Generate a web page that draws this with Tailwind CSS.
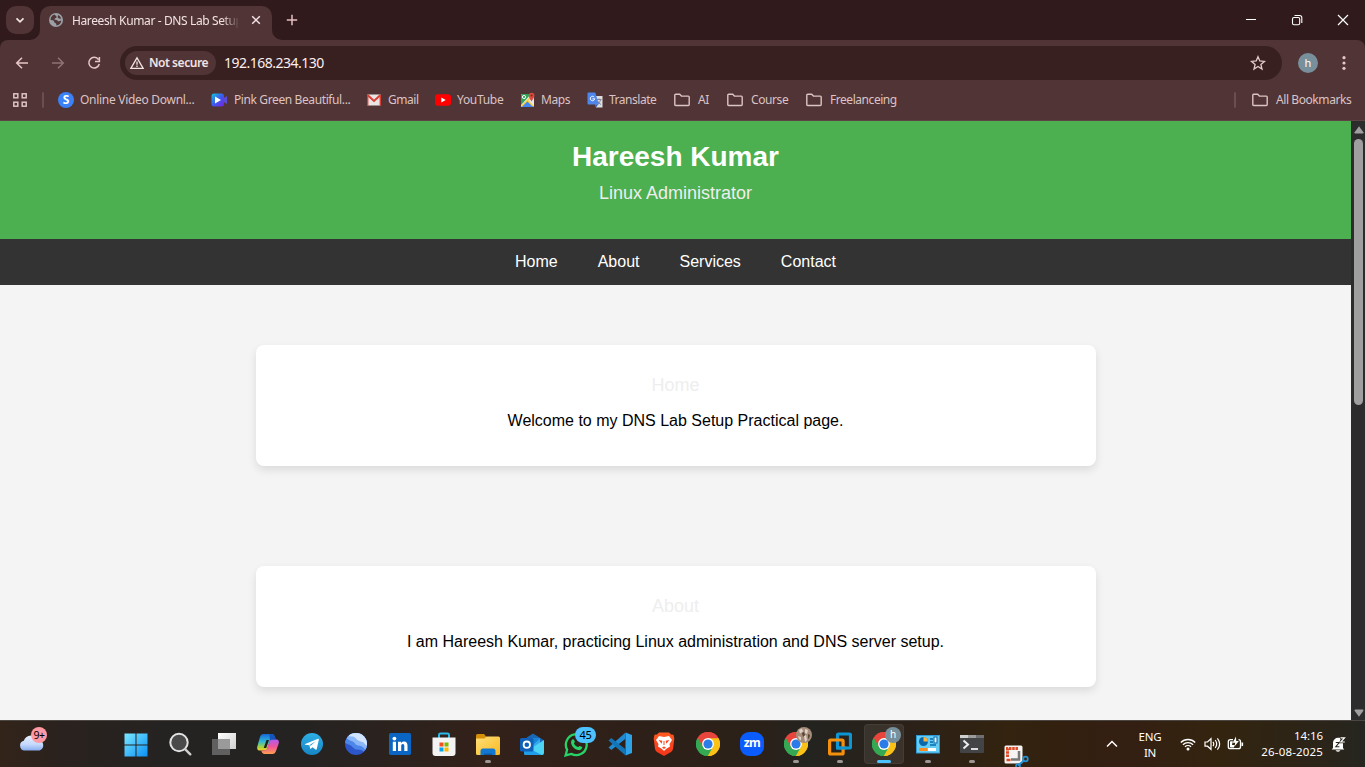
<!DOCTYPE html>
<html lang="en">
<head>
<meta charset="utf-8">
<title>Hareesh Kumar - DNS Lab Setup</title>
<script src="https://cdn.jsdelivr.net/npm/@tailwindcss/browser@4"></script>
</head>
<body class="w-[1365px] h-[767px] overflow-hidden flex flex-col bg-[#311a1b] font-['Segoe_UI','Noto_Sans',sans-serif]">
<svg class="absolute size-0">
  <defs>
    <linearGradient id="win" x1="0" y1="0" x2="1" y2="1"><stop offset="0" stop-color="#7be9ff"/><stop offset="1" stop-color="#0a8ff5"/></linearGradient>
    <linearGradient id="cloud" x1="0" y1="0" x2="0" y2="1"><stop offset="0" stop-color="#e8f1ff"/><stop offset=".6" stop-color="#c3d8fb"/><stop offset="1" stop-color="#88aef0"/></linearGradient>
    <linearGradient id="cp1" x1="0" y1="0" x2="0" y2="1"><stop offset="0" stop-color="#1668d8"/><stop offset=".45" stop-color="#2fb6d8"/><stop offset=".8" stop-color="#a8d43c"/><stop offset="1" stop-color="#f5d02c"/></linearGradient>
    <linearGradient id="cp2" x1="0" y1="0" x2="0" y2="1"><stop offset="0" stop-color="#b05af0"/><stop offset=".5" stop-color="#f0559a"/><stop offset="1" stop-color="#ffa04c"/></linearGradient>
    <linearGradient id="tg" x1="0" y1="0" x2="0" y2="1"><stop offset="0" stop-color="#2faee6"/><stop offset="1" stop-color="#1686c4"/></linearGradient>
    <linearGradient id="fold" x1="0" y1="0" x2="1" y2="1"><stop offset="0" stop-color="#ffdf7a"/><stop offset="1" stop-color="#f8b921"/></linearGradient>
    <linearGradient id="tv" x1="0" y1="0" x2="1" y2="1"><stop offset="0" stop-color="#ffffff"/><stop offset="1" stop-color="#cfcfcf"/></linearGradient>
    <linearGradient id="brv" x1="0" y1="0" x2="0" y2="1"><stop offset="0" stop-color="#ff5a1f"/><stop offset="1" stop-color="#f5331b"/></linearGradient>
    <linearGradient id="cam" x1="0" y1="0" x2="1" y2="1"><stop offset="0" stop-color="#12c7d6"/><stop offset=".5" stop-color="#3a5cf0"/><stop offset="1" stop-color="#7a20e0"/></linearGradient>
    <clipPath id="earthclip"><circle cx="12" cy="12" r="11"/></clipPath>
    <symbol id="folder" viewBox="0 0 18 16"><path d="M1.8 3.2q0-.9.9-.9h4l1.7 1.8h6.900q.9 0 .9.9v7.600q0 .9-.9.9H2.700q-.9 0-.9-.9z" fill="none" stroke="#dcc3c4" stroke-width="1.400"/></symbol>
    <symbol id="chrome" viewBox="0 0 24 24">
      <path d="M12 12 1.600 6A12 12 0 0 1 22.400 6z" fill="#e8453c"/>
      <path d="M12 12V24A12 12 0 0 1 1.600 6z" fill="#34a853"/>
      <path d="M12 12 22.400 6A12 12 0 0 1 12 24z" fill="#fbc116"/>
      <path d="M12 6.200H22.500A12 12 0 0 0 1.600 6l5.300 9z" fill="#e8453c"/>
      <path d="M1.600 6A12 12 0 0 0 12 24l5-9-5 2.500-5-2.700z" fill="#34a853"/>
      <path d="M12 6.300H22.500A12 12 0 0 1 12 24l5.200-9z" fill="#fbc116"/>
      <circle cx="12" cy="12" r="5.900" fill="#fff"/><circle cx="12" cy="12" r="4.600" fill="#2b7be9"/>
    </symbol>
  </defs>
</svg>

<!-- Tab strip -->
<header class="h-[40px] shrink-0 flex bg-[#311a1b] text-[#f3e3e3]">
  <div class="w-[40px] pl-[6px] pt-[6px]">
    <div class="size-[28px] rounded-[10px] bg-[#503436] flex items-center justify-center">
      <svg class="size-[12px]" viewBox="0 0 12 12"><path d="M2.500 4.300 6 7.800l3.500-3.500" fill="none" stroke="#f3e3e3" stroke-width="1.700"/></svg>
    </div>
  </div>
  <div class="relative w-[232px] h-[34px] mt-[6px] rounded-t-[10px] bg-[#503436] flex items-center pl-[9px] pb-[6px]">
    <svg class="absolute -left-[10px] bottom-0 size-[10px]" viewBox="0 0 10 10"><path d="M10 0v10H0A10 10 0 0 0 10 0z" fill="#503436"/></svg>
    <svg class="absolute -right-[10px] bottom-0 size-[10px]" viewBox="0 0 10 10"><path d="M0 0v10h10A10 10 0 0 1 0 0z" fill="#503436"/></svg>
    <svg class="size-[14px] shrink-0" viewBox="0 0 14 14"><circle cx="7" cy="7" r="7" fill="#9aa0a6"/><path d="M5.700 1.500C6 3 8 2.500 7.500 4.500 7 5.500 5.500 5 5.300 6.400 6.500 7 8.700 6.500 9 8.300c.8.500 2-.5 3.300-.8a5.500 5.500 0 0 1-5 4.900c.3-1.500-.2-2-1.200-2.400C4.800 9.500 5.500 7.500 3.800 7.200L1.600 7A5.500 5.500 0 0 1 5.700 1.500zM9 2.100c1.700.7 2.700 2 3.200 3.500-1.500.4-3.200-.1-3.500-1.300z" fill="#503436"/></svg>
    <div class="ml-[9px] w-[166px] overflow-hidden whitespace-nowrap text-[12px] leading-[16px] pt-px tracking-[-0.38px] [mask-image:linear-gradient(to_right,black_150px,transparent_168px)]">Hareesh Kumar - DNS Lab Setup</div>
    <svg class="ml-[13px] size-[10px] shrink-0" viewBox="0 0 10 10"><path d="m1.200 1.200 7.600 7.600m0-7.600L1.200 8.800" stroke="#f3e3e3" stroke-width="1.500"/></svg>
  </div>
  <svg class="ml-[14px] mt-[14px] size-[12px]" viewBox="0 0 12 12"><path d="M6 .8v10.400M.8 6h10.400" stroke="#e5bfc1" stroke-width="1.500"/></svg>
  <div class="ml-auto mt-[14px] flex gap-[34px] pr-[16px]">
    <svg class="size-[12px]" viewBox="0 0 12 12"><path d="M1 5.500h10" stroke="#fff"/></svg>
    <svg class="size-[12px]" viewBox="0 0 12 12"><rect x="1.500" y="3.500" width="7.200" height="7.200" rx="1.500" fill="none" stroke="#fff" stroke-width="1.100"/><path d="M3.500 1.500h5.200q2.100 0 2.100 2.100V9" fill="none" stroke="#fff" stroke-width="1.100"/></svg>
    <svg class="size-[12px]" viewBox="0 0 12 12"><path d="m1 1 10 10M11 1 1 11" stroke="#fff" stroke-width="1.200"/></svg>
  </div>
</header>

<!-- Toolbar and bookmarks -->
<section class="h-[81px] shrink-0 rounded-t-[8px] bg-[#503436] border-b border-[#5e4244]">
  <div class="h-[46px] flex items-center">
    <svg class="ml-[15px] size-[14px]" viewBox="0 0 14 14"><path d="M13 7H1.800M7 1.700 1.700 7 7 12.300" fill="none" stroke="#e8c6c7" stroke-width="1.500"/></svg>
    <svg class="ml-[22px] size-[14px]" viewBox="0 0 14 14"><path d="M1 7h11.200M7 1.700 12.300 7 7 12.300" fill="none" stroke="#8e7375" stroke-width="1.500"/></svg>
    <svg class="ml-[22px] size-[14px]" viewBox="0 0 14 14"><path d="M11.500 3.600A5.300 5.300 0 1 0 12.300 8M12.400 1v4.400H8" fill="none" stroke="#e8c6c7" stroke-width="1.500"/></svg>
    <div class="ml-[19px] w-[1162px] h-[34px] rounded-full bg-[#382021] flex items-center pl-[5px]">
      <div class="w-[91px] h-[24px] rounded-full bg-[#503436] flex items-center pl-[5px] text-[#f3e3e3]">
        <svg class="size-[14px]" viewBox="0 0 14 14"><path d="M7 1.800 13.200 12.400H.8z" fill="none" stroke="#f3e3e3" stroke-width="1.300"/><path d="M7 5.400v3.300M7 9.500v1.400" stroke="#f3e3e3" stroke-width="1.300"/></svg>
        <span class="ml-[5px] text-[12px] font-semibold tracking-[-0.45px] whitespace-nowrap">Not secure</span>
      </div>
      <span class="ml-[8px] -mt-px text-[14px] tracking-[-0.5px] text-[#fbeeee]">192.168.234.130</span>
      <svg class="ml-auto mr-[16px] size-[16px]" viewBox="0 0 16 16"><path d="m8 1.700 1.800 4.300 4.600.4-3.500 3 1.100 4.600L8 11.500 4 14l1.100-4.600-3.500-3 4.600-.4z" fill="none" stroke="#e2cbcb" stroke-width="1.300"/></svg>
    </div>
    <div class="ml-[16px] size-[20px] rounded-full bg-[#78909c] text-white text-[11px] leading-[19px] text-center">h</div>
    <svg class="ml-[24px] w-[4px] h-[16px]" viewBox="0 0 4 16"><g fill="#e8c6c7"><circle cx="2" cy="2.700" r="1.600"/><circle cx="2" cy="8" r="1.600"/><circle cx="2" cy="13.300" r="1.600"/></g></svg>
  </div>
  <div class="h-[28px] flex items-center text-[12px] leading-[16px] text-[#dcc3c4] whitespace-nowrap">
    <svg class="ml-[13px] size-[14px] shrink-0" viewBox="0 0 14 14"><g fill="none" stroke="#dcc3c4" stroke-width="1.500"><rect x=".8" y=".8" width="4" height="4"/><rect x="9.200" y=".8" width="4" height="4"/><rect x=".8" y="9.200" width="4" height="4"/><rect x="9.200" y="9.200" width="4" height="4"/></g></svg>
    <div class="ml-[15px] w-[2px] h-[16px] rounded bg-[#6d4e50]"></div>
    <div class="ml-[14px] w-[153px] flex items-center gap-[6px] tracking-[-0.29px]"><div class="size-[16px] shrink-0 rounded-full bg-[#3b82f6] text-white font-bold text-center text-[12px]">S</div>Online Video Downl...</div>
    <div class="w-[155px] flex items-center gap-[7px] tracking-[-0.39px]"><svg class="size-[16px] shrink-0" viewBox="0 0 16 16"><path d="M12 6.500 16 4v8l-4-2.500z" fill="#5b4ad8"/><rect x=".5" y="1.500" width="12.500" height="13" rx="2.500" fill="url(#cam)"/><path d="M4 4.500v7L10 8z" fill="#fff"/></svg>Pink Green Beautiful...</div>
    <div class="w-[69px] flex items-center gap-[6px] tracking-[-0.45px]"><svg class="size-[16px] shrink-0" viewBox="0 0 16 16"><rect x="1" y="2.500" width="14" height="11" rx="1" fill="#e9e5e3"/><path d="M1.500 3 8 9l6.500-6" fill="none" stroke="#d93f35" stroke-width="2"/><path d="M1.700 3v10.500M14.300 3v10.500" stroke="#d93f35" stroke-width="1.400"/></svg>Gmail</div>
    <div class="w-[85px] flex items-center gap-[6px] tracking-[-0.3px]"><svg class="size-[16px] shrink-0" viewBox="0 0 16 16"><rect y="2.200" width="16" height="11.600" rx="3" fill="#f00"/><path d="M6.300 5.500v5L10.700 8z" fill="#fff"/></svg>YouTube</div>
    <div class="w-[67px] flex items-center gap-[5px] tracking-[-0.4px]"><svg class="size-[16px] shrink-0" viewBox="0 0 16 16"><rect x="1" y="2" width="13" height="13" rx="1" fill="#e8e8e8"/><path d="M1 3q0-1 1-1h9L1 13z" fill="#31a354"/><path d="m1 15 6.500-6.500L14 15z" fill="#4285f4"/><path d="m1.300 14.500 9-9M7.500 8.500 13 14" stroke="#f7ce46" stroke-width="1.500"/><circle cx="4" cy="5" r="1.600" fill="none" stroke="#fff"/><path d="M11.500 9.500C10 7 8.800 5.500 8.800 3.500a2.800 2.800 0 0 1 5.600 0c0 2-1.400 3.500-2.900 6z" fill="#dd4b3e"/><circle cx="11.600" cy="3.500" r="1" fill="#7b2a22"/></svg>Maps</div>
    <div class="w-[86px] flex items-center gap-[6px] tracking-[-0.48px]"><svg class="size-[16px] shrink-0" viewBox="0 0 16 16"><path d="M6 4h9.500v11.500H9z" fill="#dedede"/><path d="M9.500 7.500h5M12 6.500v1M13.500 8C13 10 11.500 11.500 10 12.500M10.500 9c.7 1.500 2 2.700 3.500 3.500" fill="none" stroke="#778" stroke-width=".9"/><path d="M.5 1.500q0-1 1-1h6.700L12 12.500H1.500q-1 0-1-1z" fill="#4f86ec"/><path d="M7.200 5.100a2.200 2.200 0 1 0 .5 1.700H5.500" fill="none" stroke="#fff" stroke-width="1"/><path d="m8 12.500 1 3 2-3z" fill="#2959b5"/></svg>Translate</div>
    <div class="w-[53px] flex items-center gap-[7px] tracking-[-0.3px]"><svg class="w-[18px] h-[16px] shrink-0"><use href="#folder"/></svg>AI</div>
    <div class="w-[79px] flex items-center gap-[7px] tracking-[-0.4px]"><svg class="w-[18px] h-[16px] shrink-0"><use href="#folder"/></svg>Course</div>
    <div class="flex items-center gap-[7px] tracking-[-0.45px]"><svg class="w-[18px] h-[16px] shrink-0"><use href="#folder"/></svg>Freelanceing</div>
    <div class="ml-auto w-[2px] h-[16px] rounded bg-[#6d4e50]"></div>
    <div class="ml-[15px] w-[114px] flex items-center gap-[7px] tracking-[-0.42px]"><svg class="w-[18px] h-[16px] shrink-0"><use href="#folder"/></svg>All Bookmarks</div>
  </div>
</section>

<!-- Web page -->
<main class="h-[599px] shrink-0 flex">
  <div class="w-[1351px] h-full overflow-hidden bg-[#f4f4f4] text-center text-black font-['Liberation_Sans',Arial,sans-serif]">
    <div class="h-[118px] bg-[#4caf50] pt-[19px]">
      <h1 class="text-[28px] leading-[33px] font-bold text-white">Hareesh Kumar</h1>
      <p class="mt-[10px] text-[18px] leading-[20px] text-[#eee]">Linux Administrator</p>
    </div>
    <nav class="h-[46px] bg-[#333] flex justify-center gap-[40px] text-[16px] leading-[46px] text-white">
      <a>Home</a><a>About</a><a>Services</a><a>Contact</a>
    </nav>
    <section class="mt-[60px] ml-[256px] w-[840px] h-[121px] rounded-[8px] bg-white shadow-[0_4px_8px_rgba(0,0,0,0.1)] pt-[30px] pr-px">
      <h2 class="text-[18px] leading-[20px] text-[#eee]">Home</h2>
      <p class="mt-[17px] text-[16px] leading-[18px]">Welcome to my DNS Lab Setup Practical page.</p>
    </section>
    <section class="mt-[100px] ml-[256px] w-[840px] h-[121px] rounded-[8px] bg-white shadow-[0_4px_8px_rgba(0,0,0,0.1)] pt-[30px] pr-px">
      <h2 class="text-[18px] leading-[20px] text-[#eee]">About</h2>
      <p class="mt-[17px] text-[16px] leading-[18px]">I am Hareesh Kumar, practicing Linux administration and DNS server setup.</p>
    </section>
  </div>
  <div class="w-[14px] bg-[#2c2c2c] flex flex-col items-center">
    <svg class="mt-[5px] ml-px w-[10px] h-[8px]" viewBox="0 0 10 8"><path d="M5 .3 9.400 6.200q.3 1.300-.7 1.300H1.300q-1 0-.7-1.300z" fill="#9f9f9f"/></svg>
    <div class="mt-[5px] ml-px w-[9px] h-[266px] rounded-full bg-[#9f9f9f]"></div>
    <svg class="mt-auto mb-[3px] ml-px w-[10px] h-[8px]" viewBox="0 0 10 8"><path d="M5 7.700.6 1.800Q.3.500 1.300.5h7.400q1 0 .7 1.300z" fill="#9f9f9f"/></svg>
  </div>
</main>

<!-- Taskbar -->
<footer class="h-[47px] shrink-0 border-t border-[#4b4642] flex text-white bg-[linear-gradient(90deg,#33241a_0,#2a221e_60px,#242322_180px,#242322_300px,#33211a_480px,#2e2018_620px,#2b2119_760px,#23231f_810px,#2b2119_900px,#33230f_1010px,#33200f_1060px,#341f13_1120px,#33240f_1220px,#2b2419_1320px,#252620_1365px)]">
  <div class="relative w-[114px]">
    <svg class="ml-[19px] mt-[11px] w-[26px] h-[20px]" viewBox="0 0 26 20"><path d="M5.500 18.500a5 5 0 0 1-.7-9.800A8 8 0 0 1 19.500 8a5.400 5.400 0 0 1 1 10.500z" fill="url(#cloud)"/></svg>
    <div class="absolute left-[31px] top-[6px] size-[16px] rounded-full bg-[#ff99a4] text-black text-[10.500px] leading-[16px] text-center tracking-[-0.5px]">9+</div>
  </div>
  <div class="flex">
    <div class="w-[44px] flex justify-center pt-[12px]"><svg class="size-[24px]" viewBox="0 0 24 24"><path d="M.5.5h11v11H.5zM12.500.5h11v11h-11zM.5 12.500h11v11H.5zM12.500 12.500h11v11h-11z" fill="url(#win)"/></svg></div>
    <div class="w-[44px] flex justify-center pt-[11px]"><svg class="size-[24px]" viewBox="0 0 24 24"><circle cx="11" cy="10.500" r="8.700" fill="#4a4a4a" stroke="#e2e2e2" stroke-width="2"/><path d="m17.300 17.300 5 5" stroke="#cfcfcf" stroke-width="2.400" stroke-linecap="round"/></svg></div>
    <div class="w-[44px] flex justify-center pt-[11px]"><svg class="size-[24px]" viewBox="0 0 24 24"><rect x="6" y="1" width="18" height="16" fill="url(#tv)"/><rect y="7" width="18" height="16" fill="#6b6b6b" fill-opacity=".85"/><rect x="6" y="7" width="12" height="10" fill="#9a9a9a"/></svg></div>
    <div class="w-[44px] flex justify-center pt-[11px]"><svg class="size-[24px]" viewBox="0 0 24 24"><path d="M7.500 2h8.300c2 0 2.700 1.500 3.200 3.500l.7 2h-3.200c-1.500 0-2.300.8-2.700 2l-2.500 7.300c-.5 1.200-1.200 1.700-2.500 1.700H3.500C1.300 18.500.8 16.300 1.300 14.500L4 5C4.600 3 5.800 2 7.500 2z" fill="url(#cp1)"/><path d="M16.500 22H8.700c-2 0-3-1.500-3.500-3.500H8c1.700 0 2.500-.8 3-2l2.600-7.300c.4-1.200 1.200-1.700 2.500-1.700h4.400c2.200 0 2.700 2 2.200 4L20 19c-.6 2-1.800 3-3.500 3z" fill="url(#cp2)"/><path d="M13.500 2h2.300c2 0 2.700 1.500 3.200 3.500l.7 2h-3.200c-1.300 0-2 .5-2.500 1.500z" fill="#1554b8"/><path d="m10.500 8 2.500 0-2.800 8-2.500 0z" fill="#25211f"/></svg></div>
    <div class="w-[44px] flex justify-center pt-[12px]"><svg class="size-[22px]" viewBox="0 0 24 24"><circle cx="12" cy="12" r="12" fill="url(#tg)"/><path d="M4.500 12 18.500 6.200c.7-.2 1.100.2 1 1L17.200 17.500c-.2.700-.7.900-1.300.5l-3.400-2.500-1.800 1.700c-.4.300-.7.100-.8-.3l-.7-3.600-4.600-.6q-.8-.2-.1-.7z" fill="#fff"/><path d="m9.400 13.200 6.500-4.300-5.300 5z" fill="#2a9ad8"/></svg></div>
    <div class="w-[44px] flex justify-center pt-[11px]"><svg class="size-[24px]" viewBox="0 0 24 24"><g clip-path="url(#earthclip)"><rect width="24" height="24" fill="#2c56ca"/><path d="M0 0h24v24c-3 0-3-4-6-5.500S12 19 9 15.500 4 13 0 10z" fill="#4d86ea"/><path d="M0 0h24v20c-3-1-3-4-6-5.500s-5 0-7-3S5 9 2 5.500z" fill="#8bb6f8"/><path d="M5 0h19v14c-3-.5-3-3-5.500-4S13.500 9 12 6.500 7 5 4 4z" fill="#d3e4fd"/></g></svg></div>
    <div class="w-[44px] flex justify-center pt-[12px]"><svg class="size-[22px]" viewBox="0 0 22 22"><rect width="22" height="22" rx="1.700" fill="#0a66c2"/><circle cx="5.400" cy="5.600" r="1.900" fill="#fff"/><path d="M3.800 8.700H7V18H3.800zM9 8.700h3V10c.6-1 1.700-1.600 3-1.600 2.700 0 3.500 1.700 3.500 4.300V18h-3.200v-4.700c0-1.200-.2-2.300-1.500-2.300s-1.600 1-1.600 2.200V18H9z" fill="#fff"/></svg></div>
    <div class="w-[44px] flex justify-center pt-[11px]"><svg class="size-[24px]" viewBox="0 0 24 24"><path d="M7 6V3q0-1.500 1.500-1.500h7Q17 1.500 17 3v3" fill="none" stroke="#2bb8ea" stroke-width="2"/><path d="M.5 5.500h23V21q0 3-3 3h-17q-3 0-3-3z" fill="#f3f3f3"/><path d="M7.500 10.500h4v4h-4z" fill="#f25022"/><path d="M12.500 10.500h4v4h-4z" fill="#7fba00"/><path d="M7.500 15.500h4v4h-4z" fill="#00a4ef"/><path d="M12.500 15.500h4v4h-4z" fill="#ffb900"/></svg></div>
    <div class="w-[44px] flex flex-col items-center pt-[11px]"><svg class="size-[24px]" viewBox="0 0 24 24"><path d="M0 3.500Q0 2 1.500 2H8l2.500 3v4H0z" fill="#d58d0a"/><path d="M0 6.500h8.500L10.500 4.500H22.500Q24 4.500 24 6v15.500q0 1.500-1.500 1.500h-21Q0 23 0 21.500z" fill="url(#fold)"/><path d="M4.500 23v-4q0-2.500 2.500-2.500h10q2.500 0 2.500 2.500v4z" fill="#1277d1"/><path d="M8 21.500h8V23H8z" fill="#0d5ba5"/></svg><div class="mt-[4px] w-[6px] h-[3px] rounded-full bg-[#9d9693]"></div></div>
    <div class="w-[44px] flex justify-center pt-[11px]"><svg class="size-[24px]" viewBox="0 0 24 24"><path d="m3 8 10-6.500L23.500 8v4H3z" fill="#1868b7"/><path d="M7 6.500h13V15H7z" fill="#35a6ee"/><path d="M13 6.500h7L13 13z" fill="#1785d6"/><path d="M24 8v13q0 2-2 2H6q-2 0-2-2z" fill="#4dd4f5"/><path d="M4 14v7q0 2 2 2h16z" fill="#1f9de8"/><rect y="6" width="13.500" height="13.500" rx="1.500" fill="#0f60b6"/><circle cx="6.800" cy="12.700" r="3.200" fill="none" stroke="#fff" stroke-width="1.800"/></svg></div>
    <div class="relative w-[44px] flex justify-center pt-[11px]"><svg class="size-[25px]" viewBox="0 0 24 24"><path d="M1.500 22.500 3 17A10 10 0 1 1 7 21z" fill="none" stroke="#25d366" stroke-width="2.200"/><path d="M8.300 7c.8-.4 1.200 0 1.500.8l.6 1.500c.1.600-.8 1.200-.8 1.700.8 1.700 2.200 2.800 3.900 3.500.6 0 1-1.400 1.700-1.100l2.200 1.100c.5.500-.2 2.500-2.400 3-4.500 0-8.500-4.500-8.200-8 .2-1.200.8-2 1.500-2.500z" fill="#25d366"/></svg><div class="absolute left-[21px] top-[6px] w-[21px] h-[16px] rounded-full bg-[#4cc2ff] text-black text-[11px] leading-[16px] text-center tracking-[-0.400px]">45</div></div>
    <div class="w-[44px] flex justify-center pt-[11px]"><svg class="size-[24px]" viewBox="0 0 24 24"><path d="M17.500.5 24 3v18l-6.500 2.500z" fill="#2ea3ea"/><path d="M17.500.5v6.300L3.300 18 .5 15.500z" fill="#1f8ad2"/><path d="M17.500 23.500v-6.300L3.300 6 .5 8.500z" fill="#1474b8"/></svg></div>
    <div class="w-[44px] flex justify-center pt-[11px]"><svg class="size-[24px]" viewBox="0 0 24 24"><path d="M7 .5h10l2 2 2.500.3.8 3.700-1.300 10.500q-.5 2-2 3L12 24l-7-4q-1.500-1-2-3L1.700 6.500l.8-3.700L5 2.500z" fill="url(#brv)"/><path d="m7 4 5 1 5-1 3 4-2.500 4 .5 2.500-4 2.500-2 2-2-2-4-2.500.5-2.500L4 8z" fill="#fff"/><path d="m6.500 8 3.800.8-.6 3zM17.500 8l-3.800.8.6 3zM10 15.500l2-1 2 1-2 1.500z" fill="#fa4720"/><path d="M12 9v4" stroke="#fa4720"/></svg></div>
    <div class="w-[44px] flex justify-center pt-[11px]"><svg class="size-[24px]"><use href="#chrome"/></svg></div>
    <div class="w-[44px] flex justify-center pt-[11px]"><div class="size-[24px] rounded-[9px] bg-[#0b5cff] text-white text-[12px] leading-[22px] text-center font-bold tracking-[-0.600px]">zm</div></div>
    <div class="relative w-[44px] flex flex-col items-center pt-[11px]"><svg class="size-[24px]"><use href="#chrome"/></svg><div class="mt-[4px] w-[6px] h-[3px] rounded-full bg-[#9d9693]"></div>
      <svg class="absolute left-[22px] top-[6px] size-[16px]" viewBox="0 0 16 16"><circle cx="8" cy="8" r="8" fill="#a58d79"/><path d="M3 3l3-1.500 1 3-3 2zM9 2l3 1-1 4-2-1zM2 9l3 1v3.500L3 12zM8 9l2-1 1 5-2 2z" fill="#dfd2c8"/><path d="m6 6 2-1 1 3-2 2zM12 7l2 1-1 4-1-1z" fill="#584234"/></svg></div>
    <div class="w-[44px] flex flex-col items-center pt-[11px]"><svg class="size-[24px]" viewBox="0 0 24 24"><rect x="9.500" y="2" width="13" height="14" rx="1" fill="none" stroke="#0c96d4" stroke-width="3.200"/><rect x="1.600" y="8" width="13.500" height="14" rx="1" fill="none" stroke="#f5900c" stroke-width="3.200"/><path d="M9.500 11v5h9" fill="none" stroke="#0c96d4" stroke-width="3"/></svg><div class="mt-[4px] w-[6px] h-[3px] rounded-full bg-[#9d9693]"></div></div>
    <div class="relative w-[44px] flex flex-col items-center pt-[3px]"><div class="w-[40px] h-[40px] rounded-[4px] bg-white/8 border border-white/5 flex flex-col items-center pt-[7px]"><svg class="size-[24px] shrink-0"><use href="#chrome"/></svg><div class="mt-[4px] w-[14px] h-[3px] shrink-0 rounded-full bg-[#4cc2ff]"></div></div>
      <div class="absolute left-[23px] top-[6px] size-[16px] rounded-full bg-[#78909c] text-[10px] leading-[15px] text-center">h</div></div>
    <div class="w-[44px] flex flex-col items-center pt-[11px]"><svg class="size-[24px]" viewBox="0 0 24 24"><rect x=".5" y="3.500" width="23" height="17.500" fill="#65cdf4" stroke="#2b9ad6"/><circle cx="7.500" cy="9.500" r="4.500" fill="#0868aa"/><path d="M7.500 9.500V5A4.500 4.500 0 0 1 12 9.500z" fill="#ffb23e"/><path d="M14 7h3m-3 3h3M14 13h6" stroke="#0868aa" stroke-width="1.400"/><rect x="18" y="5" width="3" height="6" fill="#e9f7fd" stroke="#0868aa"/><path d="M3 17.500h8" stroke="#f88b1d" stroke-width="3"/><path d="M12 17.500h8" stroke="#fff" stroke-width="3"/></svg><div class="mt-[4px] w-[6px] h-[3px] rounded-full bg-[#9d9693]"></div></div>
    <div class="w-[44px] flex flex-col items-center pt-[11px]"><svg class="size-[24px]" viewBox="0 0 24 24"><rect y="3" width="24" height="18" rx="1" fill="#434446"/><path d="M0 3h8v3H0z" fill="#cfcfcf"/><path d="M8 3h8v3H8z" fill="#9c9c9c"/><path d="M16 3h8v3h-8z" fill="#6f6f6f"/><path d="m3.500 8.500 4.500 4-4.500 4" fill="none" stroke="#eee" stroke-width="2"/><path d="M11 17h7" stroke="#eee" stroke-width="1.800"/></svg><div class="mt-[4px] w-[6px] h-[3px] rounded-full bg-[#9d9693]"></div></div>
    <div class="w-[44px] pl-[10px] pt-[24px] overflow-hidden"><svg class="w-[25px] h-[22px]" viewBox="0 0 25 22"><rect x=".5" y=".5" width="18" height="18" rx="1.500" fill="#f6f3f2"/><path d="M3.500 12V3.500H14" fill="none" stroke="#e24a25" stroke-width="3" stroke-dasharray="2.500 .8"/><path d="M2.500 15h4" stroke="#e24a25" stroke-width="2.500"/><path d="M7 14.500h8V6" fill="none" stroke="#777" stroke-width="2.500"/><circle cx="21.500" cy="14" r="2.300" fill="none" stroke="#2792d2" stroke-width="1.800"/><path d="m20 15.500-6 5" stroke="#2792d2" stroke-width="2"/><circle cx="14" cy="21" r="2" fill="none" stroke="#2792d2" stroke-width="1.600"/></svg></div>
  </div>
  <div class="ml-auto flex text-[11.500px] leading-[16px] tracking-[-0.2px] pt-[8px]">
    <svg class="mt-[9px] size-[12px]" viewBox="0 0 12 12"><path d="M1 8.500 6 3.500l5 5" fill="none" stroke="#fff" stroke-width="1.500"/></svg>
    <div class="ml-[18px] w-[28px] text-center">ENG<br>IN</div>
    <svg class="ml-[16px] mt-[7px] size-[16px]" viewBox="0 0 16 16"><path d="M.8 6.500a10.200 10.200 0 0 1 14.400 0M2.900 8.700a7.200 7.200 0 0 1 10.200 0M5 10.800a4.300 4.300 0 0 1 6 0" fill="none" stroke="#fff" stroke-width="1.300"/><circle cx="8" cy="13" r="1.500" fill="#fff"/></svg>
    <svg class="ml-[8px] mt-[7px] w-[17px] h-[16px]" viewBox="0 0 17 16"><path d="M1 6v4.200h2.500L7 13.300V2.700L3.500 6z" fill="none" stroke="#fff" stroke-width="1.200"/><path d="M9 5.800q1.500 2.200 0 4.400M11.200 4q3 4 0 8M13.400 2.300q4.500 5.700 0 11.400" fill="none" stroke="#fff" stroke-width="1.200"/></svg>
    <svg class="ml-[6px] mt-[7px] w-[17px] h-[16px]" viewBox="0 0 17 16"><path d="M6 3.700H3.300Q1.300 3.700 1.300 5.700v5q0 2 2 2h8.200q2 0 2-2v-5q0-2-2-2" fill="none" stroke="#fff" stroke-width="1.300"/><path d="M15.300 6.500v3.500" stroke="#fff" stroke-width="1.600"/><path d="M3 6q0-.8.8-.8h2L5 9h2.500L7 11.500h-3.200Q3 11.500 3 10.700zM9 .5 5.700 6.800h2.500L7.500 10.500 11.800 5H9.200z" fill="#fff"/></svg>
    <div class="ml-[10px] w-[69px] text-right -mt-px whitespace-nowrap tracking-[0.17px]"><span class="tracking-[-0.1px]">14:16</span><br>26-08-2025</div>
    <svg class="ml-[8px] mr-[19px] mt-[7px] w-[15px] h-[17px]" viewBox="0 0 15 17"><path d="M2 12V6.500A5 5 0 0 1 7 1.800h3L9 5l3 1.500V12l1.300 1.500H.7z" fill="#fff"/><path d="M4.500 14.300h5q-2.500 3-5 0z" fill="#fff"/><path d="M4.800 6.500h3.400L4.800 10.700h3.600" fill="none" stroke="#2b2419" stroke-width="1.100"/><path d="M9 1.900h4L9.700 6h4" fill="none" stroke="#2b2419" stroke-width="2.400"/><path d="M9.500 1.900h4L9.800 6h4" fill="none" stroke="#fff" stroke-width="1.200"/></svg>
  </div>
</footer>
</body>
</html>
